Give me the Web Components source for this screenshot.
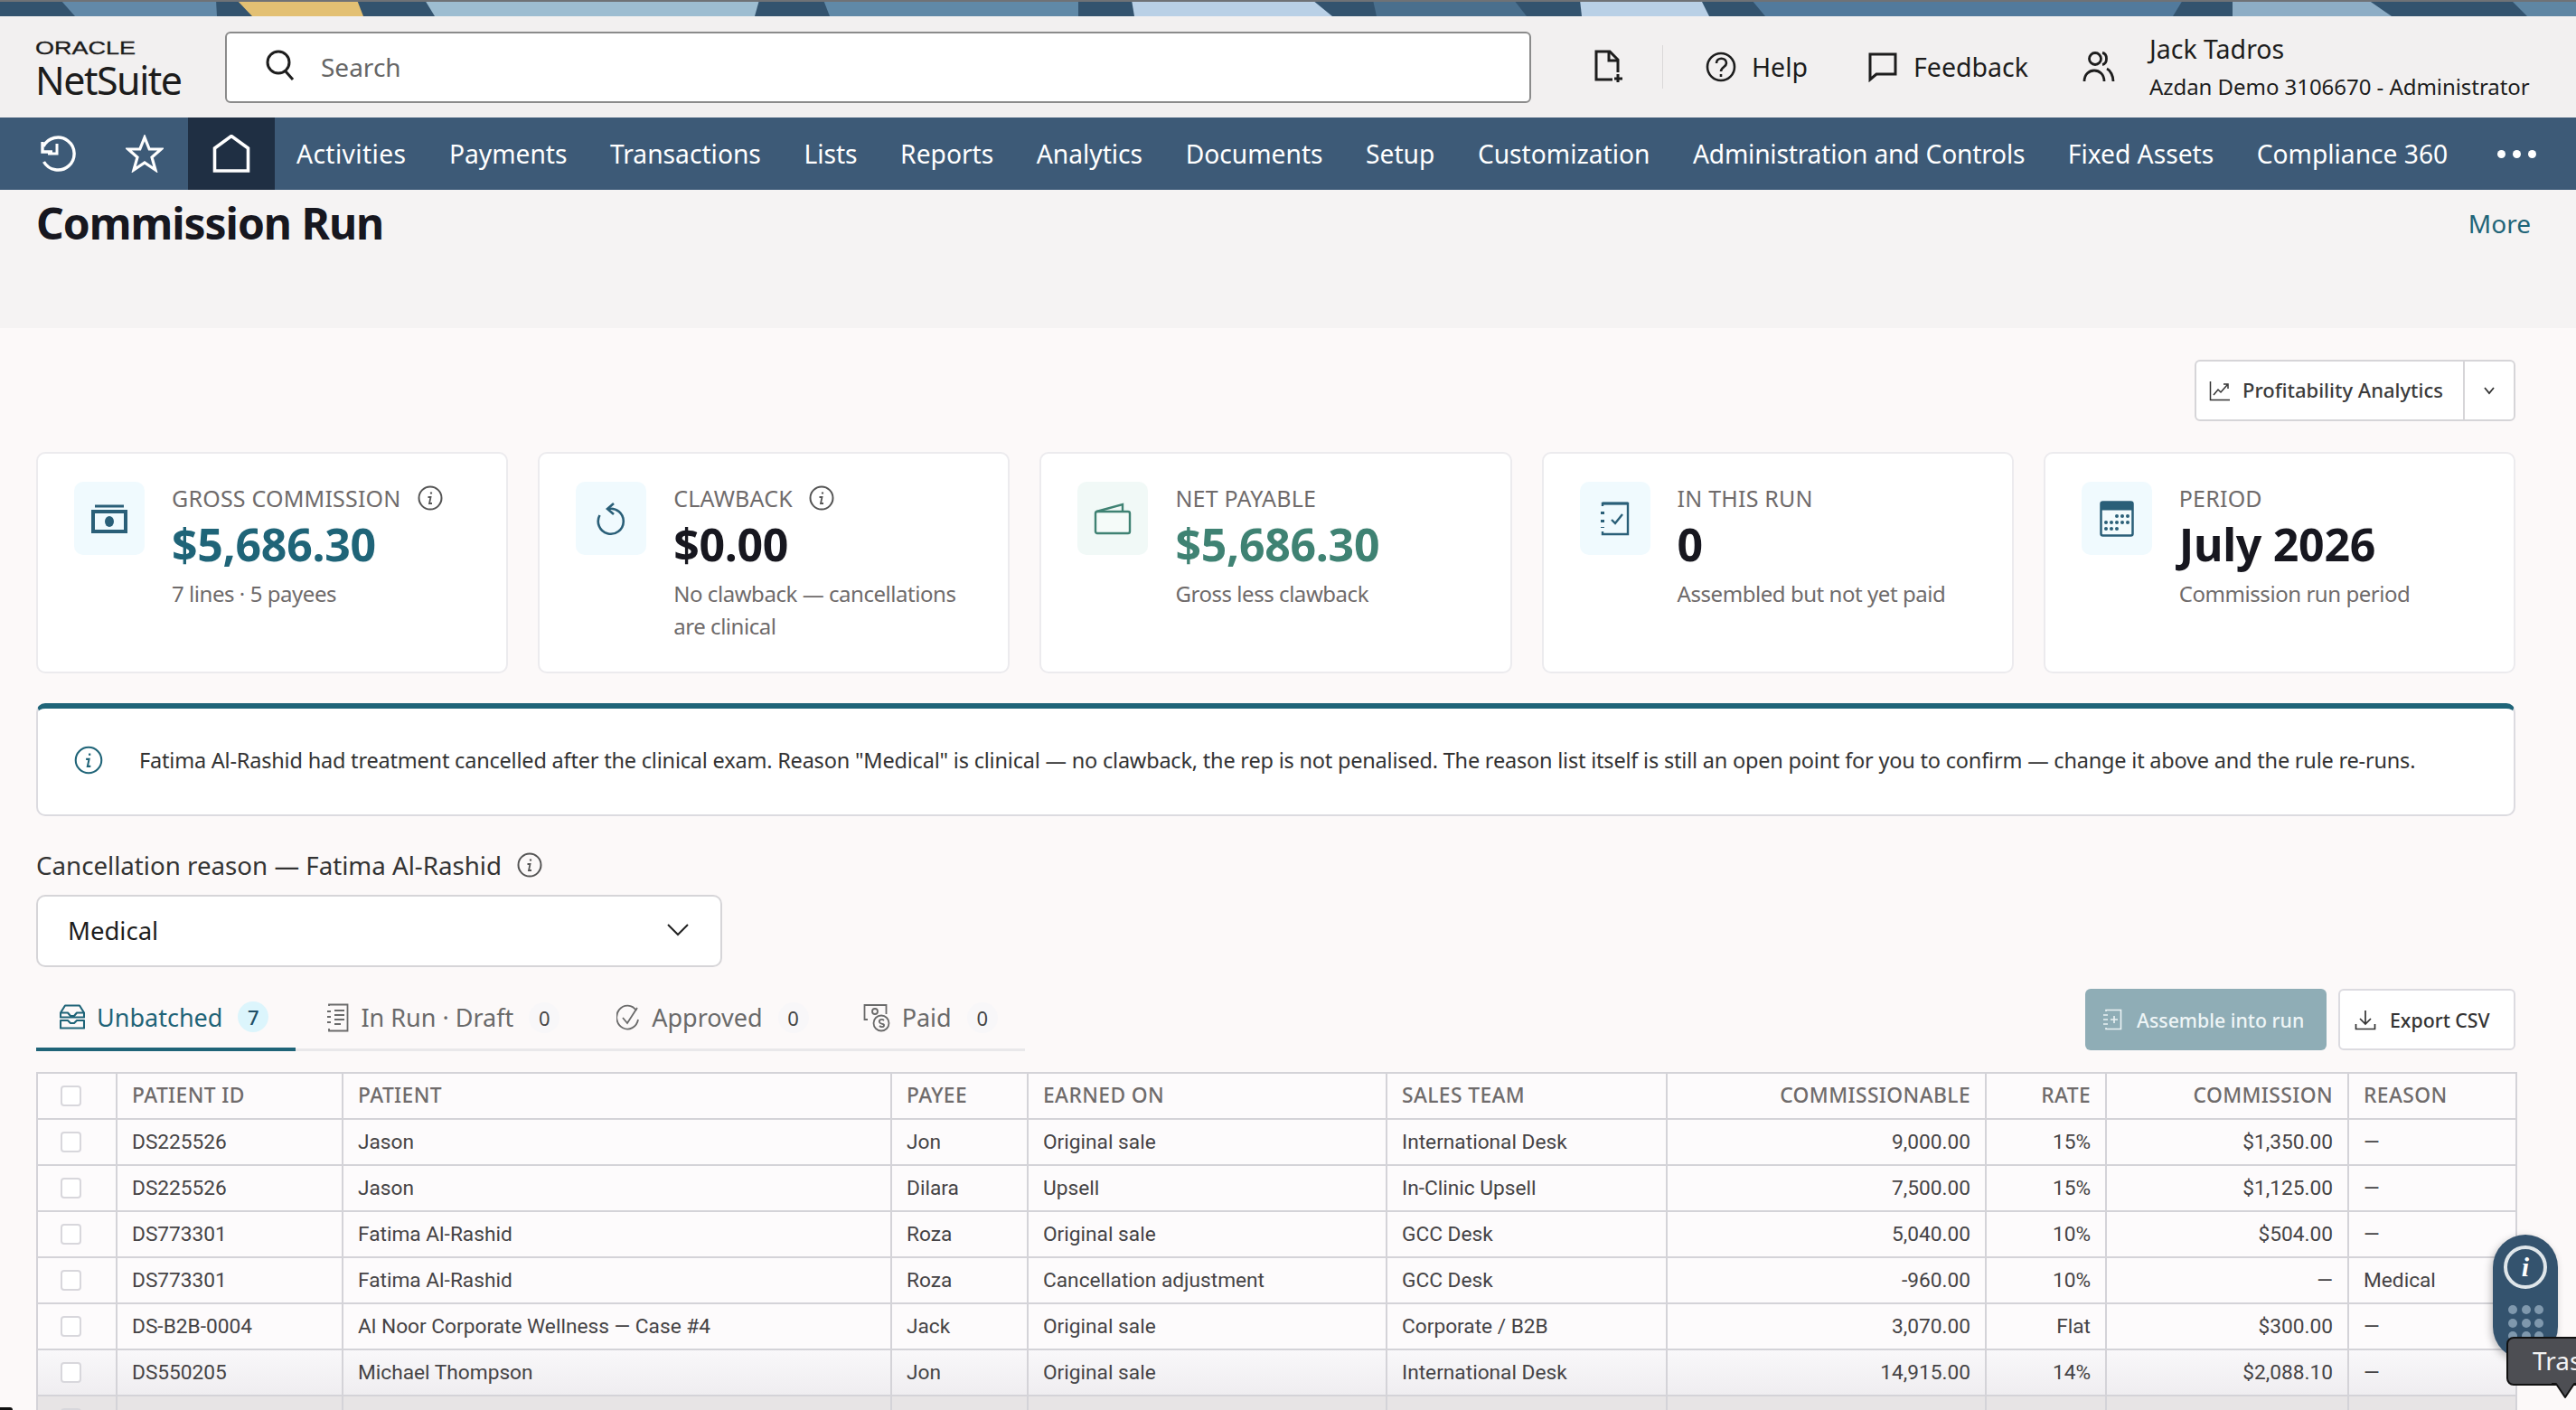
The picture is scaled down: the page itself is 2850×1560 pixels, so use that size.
<!DOCTYPE html>
<html><head><meta charset="utf-8"><title>Commission Run</title>
<style>
html,body{margin:0;padding:0;width:2850px;height:1560px;overflow:hidden;background:#fcf9f9;font-family:"Noto Sans","Open Sans",sans-serif;color:#222}
</style></head><body>
<ns-app></ns-app>
<script>
const I={
history:'<svg width="42" height="42" viewBox="0 0 42 42" fill="none" stroke="#fff" stroke-width="3.4"><path d="M5 13A18 18 0 1 1 5.5 30"/><path d="M4 8v11h11" stroke-width="3.4" fill="none"/><path d="M20 10v11H10" stroke-width="3"/></svg>',
star:'<svg width="42" height="42" viewBox="0 0 42 42" fill="none" stroke="#fff" stroke-width="3.2" stroke-linejoin="miter"><path d="M21 3l5.2 13h13L29 25l4 14-12-8-12 8 4-14L2.800 16h13z"/></svg>',
home:'<svg width="42" height="42" viewBox="0 0 42 42" fill="none" stroke="#fff" stroke-width="3.6"><path d="M2.500 15L21 1.500 39.500 15v25h-37z"/></svg>',
search:'<svg width="36" height="36" viewBox="0 0 36 36" fill="none" stroke="#1d1d1d" stroke-width="3"><circle cx="15" cy="14" r="12"/><path d="M23 24l8 9"/></svg>',
newdoc:'<svg width="34" height="38" viewBox="0 0 34 38" fill="none" stroke="#1d1d1d" stroke-width="3"><path d="M22 33H4V2h15l9 9v14"/><path d="M18 2v10h10"/><path d="M28 27v9M24 32h9"/></svg>',
help:'<svg width="34" height="34" viewBox="0 0 34 34" fill="none" stroke="#1d1d1d" stroke-width="2.600"><circle cx="17" cy="17" r="15"/><path d="M12 13c0-7 11-7 11 0 0 4-6 4-6 9"/><path d="M17 25v3"/></svg>',
feedback:'<svg width="34" height="34" viewBox="0 0 34 34" fill="none" stroke="#1d1d1d" stroke-width="3"><path d="M3 31V3h28v22H10z"/></svg>',
user:'<svg width="36" height="36" viewBox="0 0 36 36" fill="none" stroke="#1d1d1d" stroke-width="2.800"><circle cx="14" cy="9" r="6.500"/><path d="M2 34c0-16 22-16 22 0"/><path d="M22 2.500c6 1 6 12 0 13M27 20c4 2 7 8 7 14"/></svg>',
info:'<svg width="28" height="28" viewBox="0 0 28 28" fill="none" stroke="#555" stroke-width="2"><circle cx="14" cy="14" r="12.500"/><path d="M15 7.500v2" stroke-width="2.200"/><path d="M11.500 13h3l-1.500 7h3" stroke-width="1.800"/></svg>',
money:'<svg width="40" height="32" viewBox="0 0 40 32" fill="none" stroke="#2a5f78" stroke-width="4"><path d="M4 2h32" stroke-width="3"/><path d="M2 8h36v22H2z"/><ellipse cx="20" cy="19" rx="5" ry="6" fill="#2a5f78" stroke="none"/></svg>',
undo:'<svg width="34" height="38" viewBox="0 0 34 38" fill="none" stroke="#2a5f78" stroke-width="2.600"><path d="M14 8A14 14 0 1 1 4.500 15"/><path d="M20 2l-7 6 7 6"/></svg>',
wallet:'<svg width="42" height="36" viewBox="0 0 42 36" fill="none" stroke="#3f8273" stroke-width="2.400"><path d="M2 12a2 2 0 0 1 2-2h34a2 2 0 0 1 2 2v20a2 2 0 0 1-2 2H4a2 2 0 0 1-2-2z" fill="#f5fbf9"/><path d="M3 10L32 2v8"/></svg>',
check:'<svg width="36" height="40" viewBox="0 0 36 40" fill="none" stroke="#2a5f78" stroke-width="2.400"><path d="M4 6V3h28v34H4v-3"/><path d="M4 3h28" stroke-width="3"/><path d="M4 12v3M4 21v3M4 29v1" stroke-width="4"/><path d="M14 21l4 4 8-10"/></svg>',
cal:'<svg width="38" height="40" viewBox="0 0 38 40"><rect x="1.500" y="1.500" width="35" height="37" rx="2" fill="#f2fbfd" stroke="#2a5f78" stroke-width="2.500"/><rect x="1.500" y="1.500" width="35" height="9" fill="#2a5f78"/><g fill="#2a5f78"><circle cx="19" cy="17" r="2"/><circle cx="25" cy="17" r="2"/><circle cx="31" cy="17" r="2"/><circle cx="7" cy="24" r="2"/><circle cx="13" cy="24" r="2"/><circle cx="19" cy="24" r="2"/><circle cx="25" cy="24" r="2"/><circle cx="31" cy="24" r="2"/><circle cx="7" cy="31" r="2"/><circle cx="13" cy="31" r="2"/><circle cx="19" cy="31" r="2"/></g></svg>',
chart:'<svg width="24" height="24" viewBox="0 0 24 24" fill="none" stroke="#333" stroke-width="1.500"><path d="M1.500 2v20.500H23"/><path d="M5 17l5-6 3 3 7-8M16 5h5v5"/></svg>',
chevS:'<svg width="14" height="10" viewBox="0 0 14 10" fill="none" stroke="#333" stroke-width="1.800"><path d="M2 2l5 6 5-6"/></svg>',
chev:'<svg width="24" height="14" viewBox="0 0 24 14" fill="none" stroke="#222" stroke-width="2"><path d="M1 1l11 11L23 1"/></svg>',
inbox:'<svg width="28" height="28" viewBox="0 0 28 28" fill="none" stroke="#1f6478" stroke-width="2.100" stroke-linejoin="round"><path d="M6 1.500h16l5 8v5H1v-5z"/><path d="M1 9.500h8l3 3.500h4l3-3.500h8"/><path d="M1 18h8l3 3h4l3-3h8v8.500H1z"/></svg>',
draft:'<svg width="26" height="32" viewBox="0 0 26 32" fill="none" stroke="#6a6a6a" stroke-width="1.800"><path d="M4 3V1.500h20.500v29H4V28"/><path d="M10 8h11M10 13h11M10 18h11M10 23h7"/><path d="M2 9h4M2 15h4M2 21h4"/></svg>',
approved:'<svg width="26" height="30" viewBox="0 0 26 30" fill="none" stroke="#6a6a6a" stroke-width="1.800"><path d="M22 7A12 13 0 1 0 24 17"/><path d="M7 15l5 6L23 4"/></svg>',
paid:'<svg width="30" height="32" viewBox="0 0 30 32" fill="none" stroke="#6a6a6a" stroke-width="1.800"><path d="M5 18H1.500V2h24v10"/><circle cx="13" cy="9" r="3"/><circle cx="20" cy="22" r="8.500"/><path d="M23 19c-2-2-6-1-5 2s6 1 5 4c-1 2-4 1-5 0"/></svg>',
plusdoc:'<svg width="22" height="24" viewBox="0 0 22 24" fill="none" stroke="#eaf2f4" stroke-width="1.600"><path d="M4 3V1.500h16.500v21H4V21"/><path d="M1 7h5M1 12h5M1 17h5"/><path d="M13 8v8M9 12h8"/></svg>',
dl:'<svg width="24" height="24" viewBox="0 0 24 24" fill="none" stroke="#333" stroke-width="1.700"><path d="M12 2v15M6 11l6 6 6-6M1.500 17v5.500h21V17"/></svg>'
};
function def(name,html,fn){customElements.define(name,class extends HTMLElement{constructor(){super();this.attachShadow({mode:'open'}).innerHTML=html;if(fn)fn.call(this,this.shadowRoot)}})}

def('ns-banner',`<style>:host{display:block;height:18px;position:relative;background:#33536e;overflow:hidden}svg{display:block}
i{position:absolute;left:0;right:0;top:0;height:2px;background:#6f7276}</style>
<svg width="2850" height="18" viewBox="0 0 2850 18">
<path d="M67 0H239L240 18H83z" fill="#6289a8"/>
<path d="M262 0H395L402 18H279z" fill="#e3c073"/>
<path d="M470 0H840L835 18H481z" fill="#9dbdd1"/>
<path d="M911 0H1193V18H918z" fill="#6089a7"/>
<path d="M1252 0H1452L1474 18H1255z" fill="#b9d0e6"/>
<path d="M1519 0H1675L1689 18H1523z" fill="#4a6f8d"/>
<path d="M1748 0H1882L1891 18H1750z" fill="#b9d0e6"/>
<path d="M1938 0H2415L2404 18H1953z" fill="#527a9c"/>
<path d="M2470 0H2620L2646 18H2470z" fill="#8dadc5"/>
<path d="M2778 0H2850V18H2796z" fill="#5f86a3"/>
</svg><i></i>`);

def('ns-header',`<style>:host{display:flex;align-items:center;height:112px;background:#f2f0f0;padding:0 30px 0 39px;box-sizing:border-box}
.logo{width:210px;flex:none;color:#1c1c1c;line-height:1}
.o{font:400 20px "Liberation Sans";transform:scaleX(1.35);transform-origin:left;display:block;height:19px;-webkit-text-stroke:.3px #1c1c1c}
.n{font:400 43px "Noto Sans";letter-spacing:-1.5px;display:block;margin-top:-2px;height:48px}
.search{width:1445px;height:79px;flex:none;box-sizing:border-box;background:#fff;border:2px solid #8b8b8b;border-radius:6px;display:flex;align-items:center;padding-left:42px;gap:26px;font-size:28px;color:#666}
.search svg{margin-top:-2px}
.doc{margin-left:68px;display:flex}
.sep{width:1px;height:48px;background:#dad8d8;margin:0 47px 0 43px}
.it{display:flex;align-items:center;gap:17px;font-size:28.500px;color:#1d1d1d;margin-right:66px}
.u{color:#1d1d1d;margin-left:38px}
.u b{display:block;font-weight:400;font-size:28.500px;line-height:36px;margin-bottom:6px;margin-top:1px}
.u span{display:block;white-space:nowrap;line-height:36px;font-size:24px;letter-spacing:-.05px}
.user{margin-left:-6px;display:flex}
</style>
<div class="logo"><span class="o">ORACLE</span><span class="n">NetSuite</span></div>
<div class="search">${I.search}<span>Search</span></div>
<div class="doc">${I.newdoc}</div><div class="sep"></div>
<div class="it">${I.help}<span>Help</span></div>
<div class="it">${I.feedback}<span>Feedback</span></div>
<div class="user">${I.user}</div>
<div class="u"><b>Jack Tadros</b><span>Azdan Demo 3106670 - Administrator</span></div>`);

def('ns-nav',`<style>:host{display:flex;align-items:center;height:80px;background:#3d5a77;color:#fff;font-size:28.200px}
.ic{width:96px;flex:none;display:flex;justify-content:center;align-items:center;height:80px;box-sizing:border-box}
.a{background:#1f2f43;width:96px}
.first{margin-left:16px}
nav{display:flex;gap:47.500px;margin-left:24px;white-space:nowrap}
.d{display:flex;gap:8px;margin-left:55px}.d i{width:9px;height:9px;border-radius:50%;background:#fff}
</style>
<div class="ic first">${I.history}</div><div class="ic">${I.star}</div><div class="ic a">${I.home}</div>
<nav><span style="letter-spacing:.4px">Activities</span><span>Payments</span><span>Transactions</span><span>Lists</span><span>Reports</span><span>Analytics</span><span>Documents</span><span>Setup</span><span>Customization</span><span style="letter-spacing:-.2px">Administration and Controls</span><span>Fixed Assets</span><span>Compliance 360</span></nav>
<div class="d"><i></i><i></i><i></i></div>`);

def('ns-title',`<style>:host{display:flex;justify-content:space-between;align-items:flex-start;height:153px;background:#f5f3f3;padding:0 50px 0 40px;box-sizing:border-box}
h1{margin:7px 0 0;font-size:48px;font-weight:700;line-height:60px;letter-spacing:-1.050px;color:#17171f}
a{font-size:28px;color:#1f6478;margin-top:19px;line-height:36px}</style>
<h1>Commission Run</h1><a>More</a>`);

def('ns-split',`<style>:host{display:flex;justify-content:flex-end}
.b{display:flex;align-items:center;width:355px;height:68px;box-sizing:border-box;background:#fff;border:2px solid #d6d5d8;border-radius:6px;font-size:22px;font-weight:500;color:#3b3b3b}
.l{display:flex;align-items:center;gap:13px;padding-left:14px;width:297px;box-sizing:border-box;height:100%;border-right:2px solid #d6d5d8}
.l span{margin-top:-2px}
.r{flex:1;display:flex;justify-content:center}</style>
<div class="b"><div class="l">${I.chart}<span>Profitability Analytics</span></div><div class="r">${I.chevS}</div></div>`);

def('kpi-card',`<style>:host{display:flex;box-sizing:border-box;height:245px;background:#fff;border:2px solid #ecebee;border-radius:10px;padding:31px 20px 0 40px;gap:30px}
.ib{width:78px;height:81px;flex:none;border-radius:10px;background:var(--ib,#f0fafe);display:flex;align-items:center;justify-content:center}
.l{font-size:25px;line-height:36px;color:#6f6b6b;display:flex;align-items:center;gap:18px;letter-spacing:.2px}
.v{font-size:50px;font-weight:700;line-height:64px;letter-spacing:-.3px;color:var(--c,#17171f);margin-top:1px}
.s{font-size:24px;line-height:36px;color:#6f6b6b;margin-top:5px;letter-spacing:-.45px}
</style><div class="ib"><slot name="icon"></slot></div><div><div class="l"><slot name="label"></slot></div><div class="v"><slot name="value"></slot></div><div class="s"><slot name="sub"></slot></div></div>`);

def('ns-cards',`<style>:host{display:grid;grid-template-columns:repeat(5,1fr);gap:33px;margin-top:34px}
span[slot=label]{display:contents}
svg{display:block}</style>
<kpi-card style="--c:#1f6478"><span slot="icon">${I.money}</span><span slot="label" style="display:flex;align-items:center;gap:18px">GROSS COMMISSION ${I.info}</span><span slot="value">$5,686.30</span><span slot="sub">7 lines · 5 payees</span></kpi-card>
<kpi-card><span slot="icon">${I.undo}</span><span slot="label" style="display:flex;align-items:center;gap:18px">CLAWBACK ${I.info}</span><span slot="value">$0.00</span><span slot="sub">No clawback — cancellations are clinical</span></kpi-card>
<kpi-card style="--c:#3f8273;--ib:#f1f9f7"><span slot="icon">${I.wallet}</span><span slot="label">NET PAYABLE</span><span slot="value">$5,686.30</span><span slot="sub">Gross less clawback</span></kpi-card>
<kpi-card><span slot="icon">${I.check}</span><span slot="label">IN THIS RUN</span><span slot="value">0</span><span slot="sub">Assembled but not yet paid</span></kpi-card>
<kpi-card><span slot="icon">${I.cal}</span><span slot="label">PERIOD</span><span slot="value">July 2026</span><span slot="sub">Commission run period</span></kpi-card>`);

def('ns-alert',`<style>:host{display:flex;align-items:center;box-sizing:border-box;height:125px;margin-top:33px;background:#fff;border:2px solid #dcdbe0;border-top:6px solid #1f6478;border-radius:10px;padding:0 0 4px 40px;gap:40px;font-size:23.500px;letter-spacing:-.2px;color:#333;white-space:nowrap}
svg{display:block;flex:none;width:32px;height:32px}</style>${I.info.replace('#555','#1f6478').replace('width="2"','width="1.800"').replace('width="2.200"','width="2"')}<span><slot></slot></span>`);

def('ns-reason',`<style>:host{display:block;margin-top:34px}
.l{display:flex;align-items:center;gap:17px;font-size:27.700px;line-height:40px;color:#333}
.s{margin-top:13px;width:759px;height:80px;box-sizing:border-box;background:#fff;border:2px solid #d6d5d8;border-radius:10px;display:flex;justify-content:space-between;align-items:center;padding:0 35px 2px 33px;font-size:27.500px;color:#1d1d1d}
</style><div class="l"><span>Cancellation reason — Fatima Al-Rashid</span>${I.info}</div><div class="s"><span>Medical</span>${I.chev}</div>`);

def('ns-tab',`<style>:host{display:flex;align-items:center;height:68px;padding:0 30px 4px 26px;box-sizing:border-box;font-size:27px;color:#6a6a6a;gap:13px;border-bottom:3px solid #e9e8ea;white-space:nowrap}
:host([active]){color:#1f6478;border-bottom:4px solid #1f6478}
.c{display:flex;align-items:center;justify-content:center;width:34px;height:34px;border-radius:50%;background:#f8f7f9;font-size:22px;color:#444;margin-left:4px}
:host([active]) .c{background:#dcf5fc;color:#1f4f66;font-weight:500}
::slotted(span){display:flex}
</style><slot name="i"></slot><span><slot></slot></span><span class="c" id="c"></span>`);

def('ns-toolbar',`<style>:host{display:flex;justify-content:space-between;align-items:flex-end;margin-top:24px;height:69px}
.tabs{display:flex;background:linear-gradient(#e9e8ea,#e9e8ea) bottom/100% 3px no-repeat}
.btns{display:flex;gap:13px;align-self:flex-start}
.b{height:68px;box-sizing:border-box;border-radius:6px;display:flex;align-items:center;font-size:21.300px;font-weight:500;white-space:nowrap}
.p{width:267px;background:#8fadb6;color:#eef5f6;padding-left:19px;gap:16px}
.e{width:196px;background:#fff;color:#333;border:2px solid #dcdbe0;padding-left:16px;gap:15px}
svg{display:block}
ns-tab{margin-right:7px}
</style>
<div class="tabs"><ns-tab active data-n="7"><span slot="i">${I.inbox}</span>Unbatched</ns-tab><ns-tab data-n="0"><span slot="i">${I.draft}</span>In Run · Draft</ns-tab><ns-tab data-n="0" style="margin-right:4px"><span slot="i">${I.approved}</span>Approved</ns-tab><ns-tab data-n="0" style="margin-right:0"><span slot="i">${I.paid}</span>Paid</ns-tab></div>
<div class="btns"><div class="b p">${I.plusdoc}<span>Assemble into run</span></div><div class="b e">${I.dl}<span>Export CSV</span></div></div>`,function(r){r.querySelectorAll('ns-tab').forEach(t=>{t.shadowRoot.getElementById('c').textContent=t.dataset.n})});

const rows=[['DS225526','Jason','Jon','Original sale','International Desk','9,000.00','15%','$1,350.00','—'],
['DS225526','Jason','Dilara','Upsell','In-Clinic Upsell','7,500.00','15%','$1,125.00','—'],
['DS773301','Fatima Al-Rashid','Roza','Original sale','GCC Desk','5,040.00','10%','$504.00','—'],
['DS773301','Fatima Al-Rashid','Roza','Cancellation adjustment','GCC Desk','-960.00','10%','—','Medical'],
['DS-B2B-0004','Al Noor Corporate Wellness — Case #4','Jack','Original sale','Corporate / B2B','3,070.00','Flat','$300.00','—'],
['DS550205','Michael Thompson','Jon','Original sale','International Desk','14,915.00','14%','$2,088.10','—'],
['','','','','','','','','']];
const heads=['PATIENT ID','PATIENT','PAYEE','EARNED ON','SALES TEAM','COMMISSIONABLE','RATE','COMMISSION','REASON'];
const num=[5,6,7];
const cb='<td class="cb"><i></i></td>';
def('ns-table',`<style>:host{display:block;margin-top:23px}
table{border-collapse:collapse;table-layout:fixed;width:2743px;font:400 22.700px Roboto,"Noto Sans",sans-serif;color:#454345;background:#fdfbfc}
td,th{border:2px solid #d4d3d8;height:51px;padding:0 16px 1px;box-sizing:border-box;text-align:left;white-space:nowrap;overflow:hidden}
th{font:500 22.800px "Noto Sans",sans-serif;color:#6f6b6b;letter-spacing:.4px;padding-bottom:2px}
.n{text-align:right}
.cb{padding:0}
.cb i{display:block;width:23px;height:23px;margin-left:25px;box-sizing:border-box;border:2px solid #d8d7dc;border-radius:4px;background:#fff}
tbody tr:nth-child(6){background:linear-gradient(#f9f8fa,#efedf0)}
tbody tr:nth-child(7){background:#e7e4e5}
</style><table><colgroup><col style="width:88px"><col style="width:250px"><col style="width:607px"><col style="width:151px"><col style="width:397px"><col style="width:310px"><col style="width:353px"><col style="width:133px"><col style="width:268px"><col style="width:186px"></colgroup>
<thead><tr>${cb.replace(/td/g,'th')}${heads.map((h,i)=>`<th class="${num.includes(i)?'n':''}">${h}</th>`).join('')}</tr></thead>
<tbody>${rows.map(r=>`<tr>${cb}${r.map((c,i)=>`<td class="${num.includes(i)?'n':''}">${c}</td>`).join('')}</tr>`).join('')}</tbody></table>`);

def('ns-widget',`<style>:host{position:absolute;left:2758px;top:1366px;width:72px;height:138px;background:#34536e;border-radius:36px;box-shadow:-2px 3px 8px rgba(0,0,0,.25);overflow:hidden}
.o{position:absolute;left:12px;top:12px;width:48px;height:48px;box-sizing:border-box;border:4px solid #dfe6ea;border-radius:50%;color:#fff;font:italic 700 30px/40px "Liberation Serif";text-align:center}
.g{position:absolute;left:17px;top:78px;display:grid;grid-template-columns:repeat(3,10px);gap:4.500px}
.g i{width:10px;height:10px;border-radius:50%;background:#7f98ad}</style>
<div class="o">i</div><div class="g"><i></i><i></i><i></i><i></i><i></i><i></i><i></i><i></i><i></i></div>`);

def('ns-tip',`<style>:host{position:absolute;left:2773px;top:1479px;width:100px;height:54px;box-sizing:border-box;background:#4d4e53;border:2px solid #111;border-radius:8px;color:#f2f2f2;font-size:28px;line-height:48px;padding-left:27px}
svg{position:absolute;left:47px;top:48px;display:block}</style>Tras<svg width="32" height="20" viewBox="0 0 32 20"><path d="M1 2h5l10 15h0l10-15h5" fill="#4d4e53" stroke="#111" stroke-width="2" stroke-linejoin="round"/><path d="M7 0h18v2H7z" fill="#4d4e53"/></svg>`);

def('ns-app',`<style>:host{display:block;width:2850px;height:1560px;position:relative;overflow:hidden}
main{padding:35px 67px 0 40px;background:#fcf9f9;height:1197px;box-sizing:border-box}
.cn{position:absolute;left:0;bottom:0;width:14px;height:3px;background:#111;border-top-right-radius:6px}
</style>
<ns-banner></ns-banner><ns-header></ns-header><ns-nav></ns-nav><ns-title></ns-title>
<main><ns-split></ns-split><ns-cards></ns-cards>
<ns-alert>Fatima Al-Rashid had treatment cancelled after the clinical exam. Reason "Medical" is clinical — no clawback, the rep is not penalised. The reason list itself is still an open point for you to confirm — change it above and the rule re-runs.</ns-alert>
<ns-reason></ns-reason><ns-toolbar></ns-toolbar><ns-table></ns-table></main>
<ns-widget></ns-widget><ns-tip></ns-tip><div class="cn"></div>`);
</script></body></html>
